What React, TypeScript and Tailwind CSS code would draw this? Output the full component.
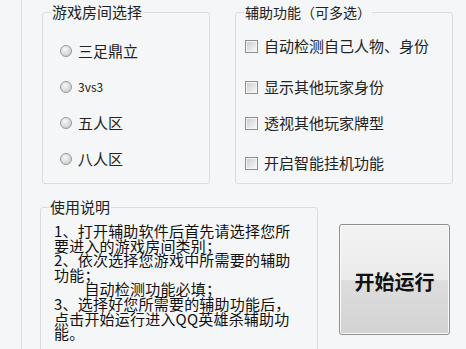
const font = "font-['Noto_Sans_CJK_SC','Noto_Sans',sans-serif]"

function Radio({ label, className = "" }: { label: string; className?: string }) {
  return (
    <label className={`flex items-center h-5 ${className}`}>
      <span className="w-[12px] h-[12px] rounded-full border border-[#999] bg-[radial-gradient(circle_at_40%_35%,#f8f8f8,#c2c2c2)] shrink-0" />
      <span className="ml-[6px] text-[15px] text-[#222] leading-5">{label}</span>
    </label>
  )
}

function Check({ label, className = "" }: { label: string; className?: string }) {
  return (
    <label className={`flex items-center h-5 ${className}`}>
      <span className="w-[13px] h-[13px] border border-[#8f8f8f] bg-[#f4f4f4] p-[1px] shrink-0">
        <span className="block w-full h-full bg-gradient-to-br from-[#cfcfcf] to-[#f6f6f6]" />
      </span>
      <span className="ml-[6px] text-[15px] text-[#222] leading-5 whitespace-nowrap">{label}</span>
    </label>
  )
}

const lines = [
  "1、打开辅助软件后首先请选择您所",
  "要进入的游戏房间类别；",
  "2、依次选择您游戏中所需要的辅助",
  "功能；",
  "\u3000\u3000自动检测功能必填；",
  "3、选择好您所需要的辅助功能后，",
  "点击开始运行进入QQ英雄杀辅助功",
  "能。",
]

export default function App() {
  return (
    <div className={`w-[466px] h-[349px] overflow-hidden bg-[#f4f6f8] flex ${font}`}>
      <div className="w-[22px] h-full border-r border-[#dcdfe2] shrink-0" />
      <div className="flex flex-col">
        <div className="flex pt-[4px]">
          <fieldset className="ml-[20px] w-[168px] h-[180px] border border-[#d6dde3] rounded-[3px]">
            <legend className="ml-[8px] px-[1px] text-[15px] leading-4 text-[#222]">游戏房间选择</legend>
            <div className="flex flex-col gap-4 pl-[17px] pt-[21px]">
              <Radio label="三足鼎立" />
              <Radio label="3vs3" className="[&>span:last-child]:text-[12px]" />
              <Radio label="五人区" />
              <Radio label="八人区" />
            </div>
          </fieldset>
          <fieldset className="ml-[25px] w-[218px] h-[180px] border border-[#d6dde3] rounded-[3px]">
            <legend className="ml-[8px] px-[1px] text-[14px] leading-4 text-[#222]">辅助功能（可多选）</legend>
            <div className="pl-[9px] pt-[16px]">
              <Check label="自动检测自己人物、身份" />
              <Check label="显示其他玩家身份" className="mt-[21px]" />
              <Check label="透视其他玩家牌型" className="mt-[16px]" />
              <Check label="开启智能挂机功能" className="mt-[20px]" />
            </div>
          </fieldset>
        </div>
        <div className="flex mt-[15px]">
          <fieldset className="ml-[18px] w-[278px] h-[170px] border border-[#d6dde3] rounded-[3px]">
            <legend className="ml-[8px] px-[1px] text-[15px] leading-4 text-[#222]">使用说明</legend>
            <div className="pl-[13px] pt-[9px] text-[15px] leading-[14.6px] text-[#111] tracking-[0.2px]">
              {lines.map((l) => (
                <div key={l} className="whitespace-pre">{l}</div>
              ))}
            </div>
          </fieldset>
          <button className="ml-[21px] mt-[25px] w-[111px] h-[111px] rounded-[3px] border border-[#8f9090] bg-[linear-gradient(#f2f2f2_0%,#ebebeb_50%,#dddddd_51%,#d3d3d3_100%)] shadow-[inset_0_0_0_1px_#fafafa] pt-[4px] text-[20px] font-bold text-[#111]">
            开始运行
          </button>
        </div>
      </div>
    </div>
  )
}
